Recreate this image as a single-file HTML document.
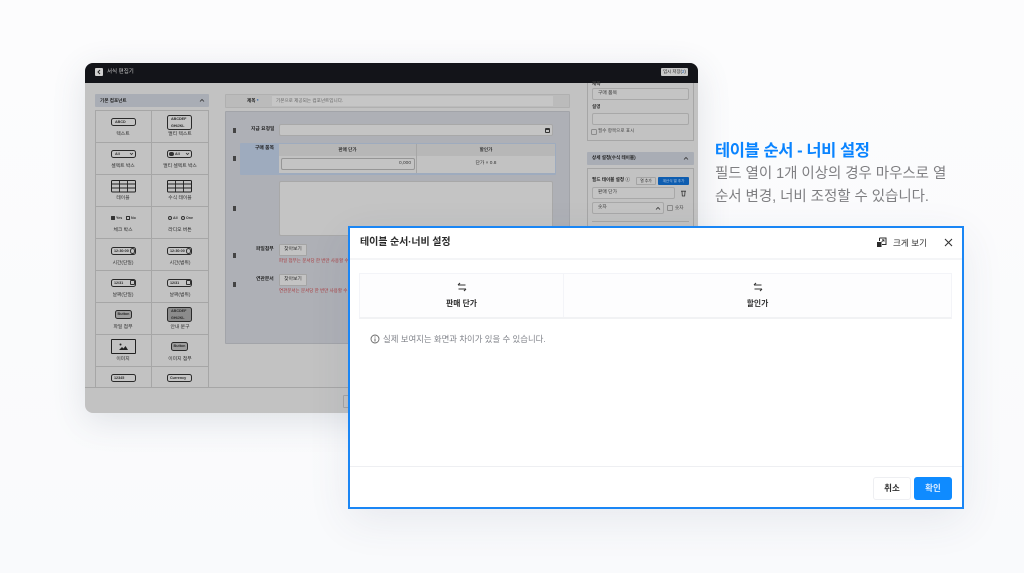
<!DOCTYPE html>
<html lang="ko"><head><meta charset="utf-8"><style>
html,body{margin:0;padding:0}
body{width:1024px;height:573px;overflow:hidden;position:relative;background:#fafbfc;font-family:"Liberation Sans","Noto Sans CJK KR",sans-serif;color:#222}
div,span{position:absolute;box-sizing:border-box;white-space:nowrap}
svg{position:absolute;overflow:visible}
.c{text-align:center}
.lb{font-size:4.8px;line-height:6px;color:#2c2c2c;text-align:center;width:56px}
.chip{border:1px solid #2a2a2a;border-radius:2.5px;background:#c4c4c4;font-size:3.7px;line-height:6px;font-weight:700;color:#2a2a2a;padding-left:3px}
.inp{background:#c4c4c4;border:1px solid #a8a8a8;border-radius:2px;font-size:4.8px;color:#3c3c3c}
.gl{background:#a6a6a6}
.btn{background:#c3c3c3;border:1px solid #a4a4a4;border-radius:1px;font-size:4.8px;color:#2c2c2c;text-align:center}
.red{font-size:4.5px;line-height:6px;color:#a8393c}
.b{font-weight:700}
#win{left:0;top:0;width:1024px;height:573px;filter:blur(.35px)}
#front{left:0;top:0;width:1024px;height:573px;filter:blur(.2px)}
</style></head><body>

<div style="left:0;top:0;width:1024px;height:573px;background:linear-gradient(180deg,#fcfcfd 0%,#f9fafc 100%)"></div>

<div id="win">
<!-- background window -->
<div style="left:85px;top:63px;width:613px;height:350px;border-radius:8px;background:#c2c2c2;overflow:hidden;box-shadow:0 8px 34px rgba(60,70,90,.14)">
<div style="left:0;top:0;width:613px;height:20px;background:#131419"></div>
</div>
<div style="left:95px;top:68px;width:8px;height:8px;background:#d0d0d0;border-radius:1px"></div>
<svg style="left:95px;top:68px" width="8" height="8"><path d="M5 2L3 4l2 2" fill="none" stroke="#222" stroke-width="1"/></svg>
<div style="left:107px;top:69px;font-size:5.5px;line-height:7px;color:#ccc">서식 편집기</div>
<div style="left:661px;top:68px;width:27px;height:8px;background:#c9c9c9;border-radius:1px;font-size:4.4px;line-height:8px;color:#222;text-align:center">임시 저장(<span style="position:static;color:#2a62a8">2</span>)</div>

<!-- left panel -->
<div style="left:95px;top:94px;width:114px;height:13px;background:#a9adb5;border-radius:1px"></div>
<div class="b" style="left:100px;top:97px;font-size:4.6px;line-height:7px;color:#222">기본 컴포넌트</div>
<svg style="left:199px;top:98px" width="6" height="5"><path d="M1 3.500L3 1.500 5 3.500" fill="none" stroke="#333" stroke-width=".8"/></svg>

<div style="left:95px;top:110px;width:114px;height:277px;border:1px solid #a6a6a6;border-bottom:0"></div>
<div class="gl" style="left:151px;top:110px;width:1px;height:277px"></div>
<div class="gl" style="left:95px;top:142px;width:114px;height:1px"></div>
<div class="gl" style="left:95px;top:174px;width:114px;height:1px"></div>
<div class="gl" style="left:95px;top:206px;width:114px;height:1px"></div>
<div class="gl" style="left:95px;top:238px;width:114px;height:1px"></div>
<div class="gl" style="left:95px;top:270px;width:114px;height:1px"></div>
<div class="gl" style="left:95px;top:302px;width:114px;height:1px"></div>
<div class="gl" style="left:95px;top:334px;width:114px;height:1px"></div>
<div class="gl" style="left:95px;top:366px;width:114px;height:1px"></div>
<div class="gl" style="left:85px;top:387px;width:613px;height:1px"></div>

<div class="chip" style="left:111px;top:118px;width:25px;height:8px">ABCD</div>
<div class="lb" style="left:95px;top:132px">텍스트</div>
<div class="chip" style="left:167px;top:115px;width:25px;height:15px;line-height:6.5px">ABCDEF<br>GHIJKL</div>
<div class="lb" style="left:152px;top:132px">멀티 텍스트</div>

<div class="chip" style="left:111px;top:150px;width:25px;height:8px">All</div>
<svg style="left:129px;top:152px" width="5" height="4"><path d="M1 1l1.500 1.500L4 1" fill="none" stroke="#333" stroke-width=".8"/></svg>
<div class="lb" style="left:95px;top:164px">셀렉트 박스</div>
<div class="chip" style="left:167px;top:150px;width:25px;height:8px;padding-left:7px">All</div>
<div style="left:169px;top:151.5px;width:4.5px;height:4.5px;border-radius:50%;background:#333"></div>
<svg style="left:185px;top:152px" width="5" height="4"><path d="M1 1l1.500 1.500L4 1" fill="none" stroke="#333" stroke-width=".8"/></svg>
<div class="lb" style="left:152px;top:164px">멀티 셀렉트 박스</div>

<svg style="left:111px;top:180px" width="25" height="12"><rect x=".5" y=".5" width="24" height="11.500" rx="1" fill="none" stroke="#222"/><path d="M.5 4h24M.5 8h24M8.500 .5v11M16.500 .5v11" stroke="#222" stroke-width=".9"/></svg>
<div class="lb" style="left:95px;top:196px">테이블</div>
<svg style="left:167px;top:180px" width="25" height="12"><rect x=".5" y=".5" width="24" height="11.500" rx="1" fill="none" stroke="#222"/><path d="M.5 4h24M.5 8h24M8.500 .5v11M16.500 .5v11" stroke="#222" stroke-width=".9"/></svg>
<div class="lb" style="left:152px;top:196px">수식 테이블</div>

<div style="left:111px;top:216px;width:4px;height:4px;background:#333;border-radius:.5px"></div>
<div class="b" style="left:116px;top:215px;font-size:3.6px;line-height:6px;color:#333">Yes</div>
<div style="left:126px;top:216px;width:4px;height:4px;border:1px solid #333;border-radius:.5px"></div>
<div class="b" style="left:131px;top:215px;font-size:3.6px;line-height:6px;color:#333">No</div>
<div class="lb" style="left:95px;top:228px">체크 박스</div>
<div style="left:168px;top:216px;width:4px;height:4px;border:1.4px solid #333;border-radius:50%"></div>
<div class="b" style="left:173px;top:215px;font-size:3.6px;line-height:6px;color:#333">All</div>
<div style="left:181px;top:216px;width:4px;height:4px;border:1px solid #333;border-radius:50%"></div>
<div class="b" style="left:186px;top:215px;font-size:3.6px;line-height:6px;color:#333">One</div>
<div class="lb" style="left:152px;top:228px">라디오 버튼</div>

<div class="chip" style="left:111px;top:247px;width:25px;height:8px;padding-left:2px">12:30:00</div>
<div style="left:130px;top:248px;width:5px;height:5.5px;border:.8px solid #333;border-radius:50%"></div>
<div class="lb" style="left:95px;top:261px">시간(단일)</div>
<div class="chip" style="left:167px;top:247px;width:25px;height:8px;padding-left:2px">12:30:00</div>
<div style="left:186px;top:248px;width:5px;height:5.5px;border:.8px solid #333;border-radius:50%"></div>
<div class="lb" style="left:152px;top:261px">시간(범위)</div>

<div class="chip" style="left:111px;top:279px;width:25px;height:8px;padding-left:2px">12/31</div>
<div style="left:130px;top:280px;width:4.5px;height:5px;border:.8px solid #333;border-radius:1px"></div>
<div class="lb" style="left:95px;top:293px">날짜(단일)</div>
<div class="chip" style="left:167px;top:279px;width:25px;height:8px;padding-left:2px">12/31</div>
<div style="left:186px;top:280px;width:4.5px;height:5px;border:.8px solid #333;border-radius:1px"></div>
<div class="lb" style="left:152px;top:293px">날짜(범위)</div>

<div class="chip c" style="left:115px;top:310px;width:17px;height:9px;background:#9e9e9e;padding:0;line-height:7px">Button</div>
<div class="lb" style="left:95px;top:325px">파일 첨부</div>
<div class="chip" style="left:167px;top:307px;width:25px;height:15px;background:#8c8c8c;line-height:6.5px">ABCDEF<br>GHIJKL</div>
<div class="lb" style="left:152px;top:325px">안내 문구</div>

<div style="left:111px;top:339px;width:25px;height:15px;border:1px solid #222;border-radius:1px"></div>
<svg style="left:118px;top:343px" width="11" height="8"><circle cx="2.500" cy="1.500" r="1" fill="#222"/><path d="M1 7l3-3 1.500 1.500L7.500 3 10 7z" fill="#222"/></svg>
<div class="lb" style="left:95px;top:357px">이미지</div>
<div class="chip c" style="left:171px;top:342px;width:17px;height:9px;background:#9e9e9e;padding:0;line-height:7px">Button</div>
<div class="lb" style="left:152px;top:357px">이미지 첨부</div>

<div class="chip" style="left:111px;top:374px;width:25px;height:8px;padding-left:2px">12345</div>
<div class="chip" style="left:167px;top:374px;width:25px;height:8px;padding-left:2px">Currency</div>

<!-- main -->
<div style="left:225px;top:94px;width:345px;height:14px;background:#bbb;border:1px solid #b0b0b0;border-radius:1px"></div>
<div class="b" style="left:247px;top:98px;font-size:4.6px;line-height:6px;color:#222">제목 <span style="position:static;color:#2a62a8">*</span></div>
<div style="left:272px;top:96px;width:281px;height:10px;background:#c6c6c6"></div>
<div style="left:276px;top:98px;font-size:4.6px;line-height:6px;color:#666">기본으로 제공되는 컴포넌트입니다.</div>

<div style="left:225px;top:111px;width:345px;height:233px;background:#aeb0b6;border:1px solid #a2a4a9;border-radius:1px"></div>
<div style="left:233px;top:128px;width:3px;height:5px;background:#444"></div>
<div style="left:233px;top:156px;width:3px;height:5px;background:#444"></div>
<div style="left:233px;top:206px;width:3px;height:5px;background:#444"></div>
<div style="left:233px;top:253px;width:3px;height:5px;background:#444"></div>
<div style="left:233px;top:282px;width:3px;height:5px;background:#444"></div>

<div class="b" style="left:251px;top:127px;font-size:4.8px;line-height:6px;color:#222">지급 요청일</div>
<div class="inp" style="left:279px;top:124px;width:274px;height:12px"></div>
<div style="left:545px;top:128px;width:5px;height:5px;border:1px solid #333;border-top-width:2px;border-radius:1px"></div>

<div style="left:240px;top:143px;width:316px;height:32px;background:#9eabbe;border-radius:1px"></div>
<div class="b" style="left:255px;top:146px;font-size:4.8px;line-height:6px;color:#222">구매 품목</div>
<div style="left:279px;top:144px;width:276px;height:29px;background:#c2c2c2"></div>
<div style="left:279px;top:144px;width:276px;height:12px;background:#b7b7b7"></div>
<div class="gl" style="left:416px;top:144px;width:1px;height:29px"></div>
<div class="b c" style="left:279px;top:147px;width:137px;font-size:4.6px;line-height:6px;color:#333">판매 단가</div>
<div class="b c" style="left:417px;top:147px;width:138px;font-size:4.6px;line-height:6px;color:#333">할인가</div>
<div class="inp" style="left:281px;top:158px;width:134px;height:12px;background:#c4c4c4;border-color:#969696;text-align:right;padding-right:3px;line-height:10px">0,000</div>
<div class="c" style="left:417px;top:161px;width:138px;font-size:4.8px;line-height:6px;color:#333">단가 × 0.8</div>

<div class="inp" style="left:279px;top:181px;width:274px;height:55px"></div>

<div class="b" style="left:256px;top:247px;font-size:4.8px;line-height:6px;color:#222">파일첨부</div>
<div class="btn" style="left:279px;top:244px;width:28px;height:12px;line-height:10px">찾아보기</div>
<div class="red" style="left:279px;top:258px">파일 첨부는 문서당 한 번만 사용할 수 있습니다.</div>
<div class="b" style="left:256px;top:277px;font-size:4.8px;line-height:6px;color:#222">연관문서</div>
<div class="btn" style="left:279px;top:274px;width:28px;height:12px;line-height:10px">찾아보기</div>
<div class="red" style="left:279px;top:288px">연관문서는 문서당 한 번만 사용할 수 있습니다.</div>

<div class="btn" style="left:343px;top:395px;width:12px;height:13px"></div>

<!-- right panel -->
<div style="left:587px;top:83px;width:107px;height:58px;border:1px solid #a6a6a6;border-top:0"></div>
<div class="b" style="left:592px;top:81px;font-size:4.6px;line-height:6px;color:#333">제목</div>
<div class="inp" style="left:592px;top:88px;width:97px;height:12px;padding-left:5px;line-height:10px">구매 품목</div>
<div class="b" style="left:592px;top:104px;font-size:4.6px;line-height:6px;color:#333">설명</div>
<div class="inp" style="left:592px;top:113px;width:97px;height:12px"></div>
<div style="left:591px;top:129px;width:6px;height:6px;border:1px solid #8c8c8c;border-radius:1.5px"></div>
<div style="left:598px;top:128px;font-size:4.6px;line-height:6px;color:#444">필수 항목으로 표시</div>

<div style="left:587px;top:152px;width:107px;height:13px;background:#a9adb5;border-radius:1px"></div>
<div class="b" style="left:592px;top:155px;font-size:4.6px;line-height:6px;color:#222">상세 설정(수식 테이블)</div>
<svg style="left:683px;top:156px" width="6" height="5"><path d="M1 3.500L3 1.500 5 3.500" fill="none" stroke="#333" stroke-width=".8"/></svg>
<div style="left:587px;top:168px;width:107px;height:60px;border:1px solid #a6a6a6"></div>
<div class="b" style="left:592px;top:177px;font-size:4.6px;line-height:6px;color:#222">필드 테이블 설정 ⓘ</div>
<div class="btn" style="left:636px;top:177px;width:20px;height:8px;font-size:3.8px;line-height:6px">열 추가</div>
<div style="left:658px;top:177px;width:31px;height:8px;background:#0e5db0;border-radius:1px;font-size:3.6px;line-height:8px;color:#b4c8e0;text-align:center">계산식 열 추가</div>
<div class="inp" style="left:592px;top:187px;width:83px;height:12px;padding-left:5px;line-height:10px">판매 단가</div>
<svg style="left:680px;top:190px" width="7" height="7"><path d="M1 1.200h5M2 1.500l.3 4.500h2.400l.3-4.500" fill="none" stroke="#333" stroke-width=".8"/></svg>
<div class="inp" style="left:592px;top:202px;width:72px;height:12px;padding-left:5px;line-height:10px">숫자</div>
<svg style="left:655px;top:206px" width="6" height="5"><path d="M1 3.500L3 1.500 5 3.500" fill="none" stroke="#333" stroke-width=".8"/></svg>
<div style="left:667px;top:205px;width:6px;height:6px;border:1px solid #8c8c8c;border-radius:1px"></div>
<div style="left:675px;top:205px;font-size:4.6px;line-height:6px;color:#444">숫자</div>
<div class="gl" style="left:592px;top:221px;width:97px;height:1px"></div>
</div>

<div id="front">
<!-- caption -->
<div class="b" style="left:715px;top:140px;font-size:16.5px;line-height:22px;color:#0a84ff;letter-spacing:-.42px">테이블 순서 - 너비 설정</div>
<div style="left:715px;top:163px;font-size:14.5px;line-height:23px;color:#7f7f82;letter-spacing:-.05px">필드 열이 1개 이상의 경우 마우스로 열<br>순서 변경, 너비 조정할 수 있습니다.</div>

<!-- modal -->
<div style="left:348px;top:226px;width:616px;height:283px;background:#fff;border:2px solid #1a86f5;box-shadow:0 12px 40px rgba(60,70,100,.09)"></div>
<div class="b" style="left:360px;top:235px;font-size:10px;line-height:16px;color:#2a2a2a;letter-spacing:-.1px">테이블 순서·너비 설정</div>
<svg style="left:876px;top:237px" width="11" height="11"><path d="M3.500 1h6.500v6.500H6" fill="none" stroke="#2a2a2a" stroke-width="1"/><path d="M3.500 1v3" stroke="#2a2a2a" stroke-width="1"/><rect x="1" y="5" width="4.500" height="5" fill="#2a2a2a"/><path d="M5.500 5L8 2.800M6 2.800h2v2" fill="none" stroke="#2a2a2a" stroke-width=".8"/></svg>
<div style="left:893px;top:236px;font-size:8.6px;line-height:14px;color:#333">크게 보기</div>
<svg style="left:944px;top:238px" width="9" height="9"><path d="M1 1l7 7M8 1L1 8" stroke="#333" stroke-width="1.100" fill="none"/></svg>
<div style="left:350px;top:258px;width:612px;height:2px;background:#f4f5f7"></div>

<div style="left:359px;top:273px;width:593px;height:46px;background:#fdfdfe;border:1px solid #f3f4f8;border-bottom:2px solid #f1f2f4"></div>
<div style="left:563px;top:274px;width:1px;height:43px;background:#f3f4f8"></div>
<svg style="left:457px;top:282px" width="10" height="10"><path d="M1 3h7.500M1 3l2-2M9 7H1.500M9 7L7 9" fill="none" stroke="#333" stroke-width="1.100"/></svg>
<div class="b c" style="left:360px;top:297px;width:203px;font-size:7.800px;line-height:14px;color:#2a2a2a">판매 단가</div>
<svg style="left:753px;top:282px" width="10" height="10"><path d="M1 3h7.500M1 3l2-2M9 7H1.500M9 7L7 9" fill="none" stroke="#333" stroke-width="1.100"/></svg>
<div class="b c" style="left:564px;top:297px;width:387px;font-size:7.800px;line-height:14px;color:#333">할인가</div>

<svg style="left:370px;top:334px" width="10" height="10"><circle cx="5" cy="5" r="4" fill="none" stroke="#666" stroke-width=".9"/><path d="M5 4.500v3M5 2.500v1" stroke="#666" stroke-width="1"/></svg>
<div style="left:383px;top:332px;font-size:8.400px;line-height:14px;color:#80838a">실제 보여지는 화면과 차이가 있을 수 있습니다.</div>

<div style="left:350px;top:466px;width:612px;height:1px;background:#eeeff2"></div>
<div class="c" style="left:873px;top:477px;width:38px;height:23px;border:1px solid #eeeff2;border-radius:3px;background:#fff;font-size:8.500px;line-height:21px;color:#333;font-weight:700">취소</div>
<div class="c" style="left:914px;top:477px;width:38px;height:23px;border-radius:3px;background:#0f8bff;font-size:8.500px;line-height:23px;color:#dcecff;font-weight:700">확인</div>
</div>
</body></html>
